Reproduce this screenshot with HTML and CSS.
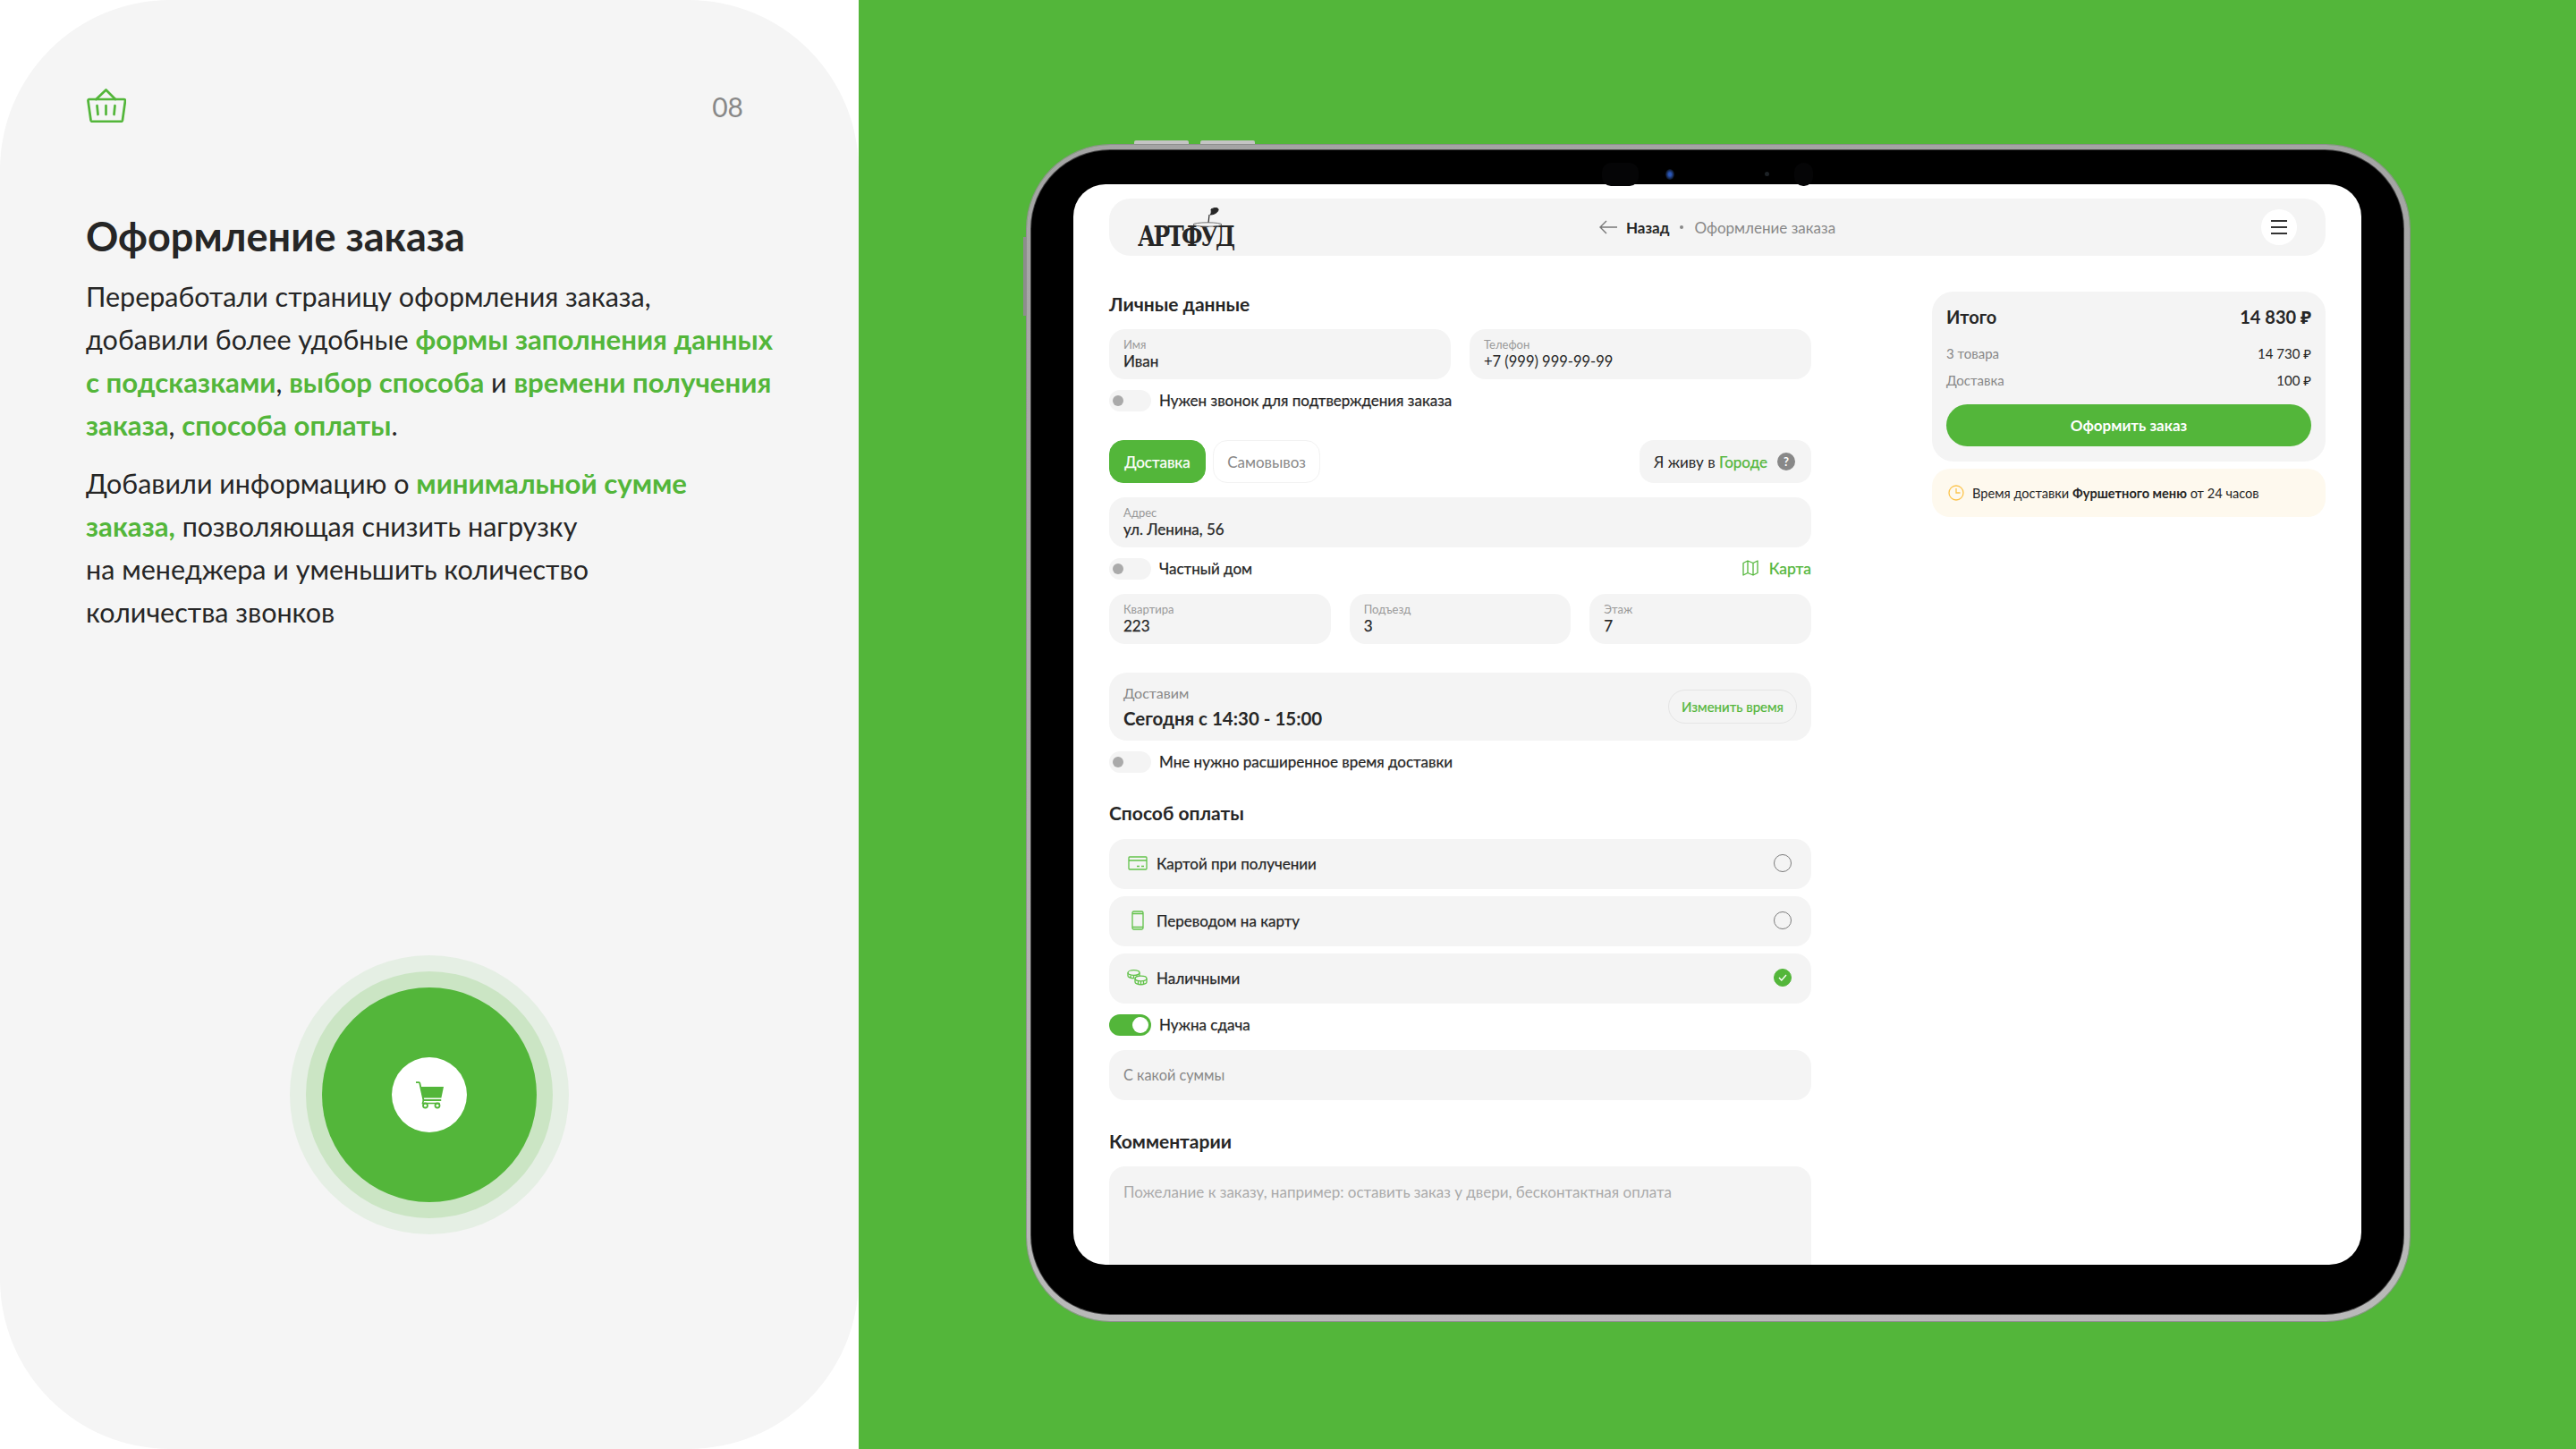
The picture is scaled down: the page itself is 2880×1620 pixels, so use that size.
FILE: index.html
```html
<!DOCTYPE html>
<html lang="ru">
<head>
  <meta charset="UTF-8">
  <title>Оформление заказа</title>
  <link rel="stylesheet" href="styles.css">
</head>
<body>
  <div class="slide">
    <section class="panel">
      <div class="panel-top">
        <svg class="basket" viewBox="0 0 44 38" fill="none" stroke="#53b63a" stroke-width="2.700" stroke-linejoin="round" stroke-linecap="round">
          <path d="M10.500 12 21.500 1.500 32 12"/>
          <path d="M2.500 12h39a1.500 1.500 0 0 1 1.500 1.700l-3 21.500a2 2 0 0 1-2 1.600H6.500a2 2 0 0 1-2-1.600l-3-21.500A1.500 1.500 0 0 1 2.500 12z"/>
          <path d="M11.500 19l1 10M21.500 19v10M31.500 19l-1 10"/>
        </svg>
        <span class="page-no">08</span>
      </div>
      <h1>Оформление заказа</h1>
      <p>Переработали страницу оформления заказа,<br>добавили более удобные <b>формы заполнения данных<br>с подсказками</b>, <b>выбор способа</b> и <b>времени получения<br>заказа</b>, <b>способа оплаты</b>.</p>
      <p class="second">Добавили информацию о <b>минимальной сумме<br>заказа,</b> позволяющая снизить нагрузку<br>на менеджера и уменьшить количество<br>количества звонков</p>
      <div class="ring-outer">
        <div class="ring-mid">
          <div class="ring-core">
            <div class="cart-circle">
              <svg width="31" height="31" viewBox="0 0 31 31" fill="none" stroke="#53b63a">
                <path d="M0 1.200h3.300a1 1 0 0 1 1 .8L8.500 21h19" stroke-width="1.800" stroke-linecap="round"/>
                <path d="M5 6h26l-2.600 12.500H7.600z" fill="#53b63a" stroke="none"/>
                <path d="M8.500 21 7.500 24.500h19" stroke-width="1.600"/>
                <circle cx="10.500" cy="27" r="2.500" stroke-width="1.800"/>
                <circle cx="24" cy="27" r="2.500" stroke-width="1.800"/>
              </svg>
            </div>
          </div>
        </div>
      </div>
    </section>

    <section class="stage">
      <div class="tablet">
        <span class="side-btn top-one"></span>
        <span class="side-btn top-two"></span>
        <span class="side-btn left-one"></span>
        <div class="bezel">
          <span class="sensor sensor-a"></span>
          <span class="cam"></span>
          <span class="cam-small"></span>
          <span class="sensor sensor-b"></span>
          <div class="screen">
            <header class="bar">
              <div class="logo">
                <span class="logo-text">АРТФУД</span>
                <svg class="logo-bowl" width="40" height="32" viewBox="0 0 40 32" fill="none" stroke="#262626">
                  <path d="M24 2c4-2.500 9-2 8 1-1 3-5 5-9 5 2-2 1-4 1-6z" fill="#262626"/>
                  <path d="M22 8l-1 9" stroke-width="1.200"/>
                  <ellipse cx="20" cy="19" rx="16" ry="2.200" fill="#f4f4f4" stroke-width=".8" stroke="#555"/>
                </svg>
              </div>
              <nav class="crumbs">
                <svg width="20" height="16" viewBox="0 0 20 16" fill="none" stroke="#777" stroke-width="1.400"><path d="M8 1 1 8l7 7M1 8h19"/></svg>
                <span class="back">Назад</span>
                <span class="dot"></span>
                <span class="crumb-now">Оформление заказа</span>
              </nav>
              <button class="burger"><i></i><i></i><i></i></button>
            </header>

            <div class="columns">
              <main class="form">
                <h2>Личные данные</h2>
                <div class="row-two">
                  <div class="field"><label>Имя</label><span>Иван</span></div>
                  <div class="field"><label>Телефон</label><span class="thin">+7 (999) 999-99-99</span></div>
                </div>
                <div class="check-row"><span class="toggle"></span>Нужен звонок для подтверждения заказа</div>

                <div class="tabs">
                  <span class="tab active">Доставка</span>
                  <span class="tab">Самовывоз</span>
                  <span class="city">Я живу в&nbsp;<em>Городе</em><span class="help">?</span></span>
                </div>
                <div class="field address"><label>Адрес</label><span>ул. Ленина, 56</span></div>
                <div class="check-row">
                  <span class="toggle"></span>Частный дом
                  <a class="map-link">
                    <svg width="18" height="18" viewBox="0 0 18 18" fill="none" stroke="#53b63a" stroke-width="1.300" stroke-linejoin="round"><path d="M1 3.500 6 1l6 2.500L17 1v13.500L12 17l-6-2.500L1 17zM6 1v13.500M12 3.500V17"/></svg>
                    Карта
                  </a>
                </div>
                <div class="row-three">
                  <div class="field"><label>Квартира</label><span>223</span></div>
                  <div class="field"><label>Подъезд</label><span>3</span></div>
                  <div class="field"><label>Этаж</label><span>7</span></div>
                </div>
                <div class="delivery">
                  <div>
                    <div class="delivery-label">Доставим</div>
                    <div class="delivery-time">Сегодня с 14:30 - 15:00</div>
                  </div>
                  <span class="change-btn">Изменить время</span>
                </div>
                <div class="check-row"><span class="toggle"></span>Мне нужно расширенное время доставки</div>

                <h2 class="pay-title">Способ оплаты</h2>
                <div class="pay-list">
                  <div class="pay">
                    <span class="pay-icon">
                      <svg width="22" height="16" viewBox="0 0 22 16" fill="none" stroke="#62c24a" stroke-width="1.300"><rect x="1" y="1" width="20" height="14" rx="1"/><path d="M1 5h20M10 11.500h3M15 11.500h3"/></svg>
                    </span>
                    Картой при получении
                    <span class="radio"></span>
                  </div>
                  <div class="pay">
                    <span class="pay-icon">
                      <svg width="14" height="22" viewBox="0 0 14 22" fill="none" stroke="#62c24a" stroke-width="1.300"><rect x="1" y="1" width="12" height="20" rx="1.500"/><path d="M1 3.500h12M1 18.500h12"/></svg>
                    </span>
                    Переводом на карту
                    <span class="radio"></span>
                  </div>
                  <div class="pay">
                    <span class="pay-icon">
                      <svg width="23" height="18" viewBox="0 0 23 18" fill="none" stroke="#62c24a" stroke-width="1.300"><ellipse cx="7.500" cy="3.500" rx="6.500" ry="2.800"/><path d="M1 3.500v3.500c0 1.500 3 2.800 6.500 2.800M14 3.500v3.500M4 6.500v3M7.500 7v3M11 6.500v1"/><ellipse cx="15.500" cy="10" rx="6.500" ry="2.800"/><path d="M9 10v4c0 1.500 3 2.800 6.500 2.800s6.500-1.300 6.500-2.800v-4M12.500 13v3.500M15.500 13v4M18.500 13v3.500"/></svg>
                    </span>
                    Наличными
                    <span class="radio checked">
                      <svg width="10" height="8" viewBox="0 0 10 8" fill="none" stroke="#fff" stroke-width="1.300"><path d="M1 4l2.800 3L9 1"/></svg>
                    </span>
                  </div>
                </div>
                <div class="check-row"><span class="toggle on"></span>Нужна сдача</div>
                <div class="field single">С какой суммы</div>

                <h2 class="comment-title">Комментарии</h2>
                <div class="comment">Пожелание к заказу, например: оставить заказ у двери, бесконтактная оплата</div>
              </main>

              <aside class="side">
                <div class="total">
                  <div class="total-head"><span>Итого</span><span>14 830 ₽</span></div>
                  <div class="total-row"><span class="muted">3 товара</span><span>14 730 ₽</span></div>
                  <div class="total-row"><span class="muted">Доставка</span><span>100 ₽</span></div>
                  <button class="order">Оформить заказ</button>
                </div>
                <div class="note">
                  <svg width="18" height="18" viewBox="0 0 18 18" fill="none" stroke="#fcc44d" stroke-width="1.300"><circle cx="9" cy="9" r="8"/><path d="M9 4v5h4.500"/></svg>
                  <span>Время доставки <b>Фуршетного меню</b> от 24 часов</span>
                </div>
              </aside>
            </div>
          </div>
        </div>
      </div>
    </section>
  </div>
</body>
</html>
```

FILE: styles.css
```css
* {
  box-sizing: border-box;
}

body {
  margin: 0;
  background: #fff;
  font-family: "Lato", "Noto Sans", sans-serif;
  color: #262626;
}

.slide {
  display: flex;
  width: 2880px;
  height: 1620px;
  overflow: hidden;
}

/* left panel */
.panel {
  width: 960px;
  height: 1620px;
  padding: 99px 96px 0;
  background: #f5f5f5;
  border-radius: 190px;
}

.panel-top {
  display: flex;
  align-items: center;
  justify-content: space-between;
  padding: 0 33px 0 1px;
}

.basket {
  display: block;
  width: 44px;
  height: 38px;
}

.page-no {
  margin-top: 2px;
  font-size: 30px;
  color: #888;
}

h1 {
  margin: 99px 0 0;
  font-size: 45px;
  line-height: 56px;
  font-weight: 700;
}

.panel p {
  margin: 15px 0 0;
  font-size: 30.500px;
  line-height: 48px;
  white-space: nowrap;
}

.panel p.second {
  margin-top: 17px;
}

.panel b {
  font-size: 31.200px;
  color: #53b63a;
  font-weight: 700;
}

.ring-outer,
.ring-mid,
.ring-core,
.cart-circle {
  display: flex;
  align-items: center;
  justify-content: center;
  border-radius: 50%;
}

.ring-outer {
  width: 312px;
  height: 312px;
  margin: 360px auto 0;
  background: #e5efe4;
}

.ring-mid {
  width: 276px;
  height: 276px;
  background: #cbe5c4;
}

.ring-core {
  width: 240px;
  height: 240px;
  background: #53b63a;
}

.cart-circle {
  width: 84px;
  height: 84px;
  background: #fff;
}

/* tablet */
.stage {
  width: 1920px;
  height: 1620px;
  padding: 162px 0 0 188px;
  background: #53b63a;
}

.tablet {
  position: relative;
  width: 1546px;
  height: 1315px;
  padding: 6px 7px 8px 5px;
  border-radius: 94px;
  background: linear-gradient(#a4a4a4, #b9b9b9);
  box-shadow: 0 0 0 1px #8f8f8f;
}

.side-btn {
  position: absolute;
  background: #c4c4c4;
}

.top-one {
  left: 120px;
  top: -5px;
  width: 61px;
  height: 4px;
  border-radius: 2px 2px 0 0;
}

.top-two {
  left: 194px;
  top: -5px;
  width: 61px;
  height: 4px;
  border-radius: 2px 2px 0 0;
}

.left-one {
  left: -4px;
  top: 103px;
  width: 3px;
  height: 88px;
  background: #8d8d8d;
}

.bezel {
  position: relative;
  width: 100%;
  height: 100%;
  padding: 38px 47px 55px;
  background: #000;
  border-radius: 88px;
  box-shadow: 0 0 0 1px #444;
}

.sensor {
  position: absolute;
  top: 14px;
  height: 26px;
  background: #050506;
  border-radius: 10px;
}

.sensor-a {
  left: 638px;
  width: 41px;
}

.sensor-b {
  left: 853px;
  width: 21px;
}

.cam {
  position: absolute;
  left: 709px;
  top: 21px;
  width: 10px;
  height: 12px;
  border-radius: 50%;
  background: radial-gradient(#2b57b8 20%, #0b1220 70%);
}

.cam-small {
  position: absolute;
  left: 820px;
  top: 24px;
  width: 5px;
  height: 5px;
  border-radius: 50%;
  background: #1d2226;
}

.screen {
  height: 1208px;
  padding: 16px 40px 0;
  overflow: hidden;
  background: #fff;
  border-radius: 36px;
}

.bar {
  display: grid;
  grid-template-columns: 1fr auto 1fr;
  align-items: center;
  height: 64px;
  padding: 0 32px;
  background: #f4f4f4;
  border-radius: 24px;
}

.logo {
  position: relative;
  width: 107px;
  height: 64px;
}

.logo-text {
  position: absolute;
  left: 0;
  bottom: 9px;
  font-family: "DejaVu Serif", serif;
  font-weight: 700;
  font-size: 31px;
  line-height: 26px;
  letter-spacing: -3.500px;
  color: #262626;
  transform: scaleX(.8);
  transform-origin: left;
}

.logo-bowl {
  position: absolute;
  left: 58px;
  top: 10px;
}

.crumbs {
  display: flex;
  align-items: center;
  gap: 10px;
  font-size: 17px;
}

.back {
  font-weight: 700;
}

.dot {
  width: 4px;
  height: 4px;
  margin: 0 2px;
  border-radius: 50%;
  background: #888;
}

.crumb-now {
  color: #888;
}

.burger {
  display: flex;
  flex-direction: column;
  align-items: center;
  justify-content: center;
  justify-self: end;
  gap: 5px;
  width: 40px;
  height: 40px;
  padding: 0;
  border: 0;
  border-radius: 50%;
  background: #fff;
}

.burger i {
  display: block;
  width: 18px;
  height: 2px;
  background: #333;
}

.columns {
  display: flex;
  justify-content: space-between;
  margin-top: 40px;
}

.form {
  width: 785px;
  height: 1100px;
}

h2 {
  margin: 0 0 14px;
  font-size: 21px;
  line-height: 28px;
  font-weight: 700;
}

.row-two {
  display: grid;
  grid-template-columns: 1fr 1fr;
  gap: 21px;
}

.row-three {
  display: grid;
  grid-template-columns: 1fr 1fr 1fr;
  gap: 21px;
  margin-top: 16px;
}

.field {
  display: flex;
  flex-direction: column;
  justify-content: center;
  gap: 2px;
  height: 56px;
  padding: 0 16px;
  background: #f4f4f4;
  border-radius: 18px;
  font-size: 17px;
  line-height: 20px;
  -webkit-text-stroke: .25px #262626;
}

.field label {
  font-size: 13px;
  line-height: 14px;
  color: #999;
  -webkit-text-stroke: 0;
}

.field .thin {
  font-size: 16.500px;
  -webkit-text-stroke: 0;
}

.field.address {
  margin-top: 16px;
}

.field.single {
  margin-top: 16px;
  font-size: 16.300px;
  color: #888;
  -webkit-text-stroke: 0;
}

.check-row {
  display: flex;
  align-items: center;
  height: 24px;
  margin-top: 12px;
  padding-bottom: 2px;
  font-size: 17px;
  -webkit-text-stroke: .25px #262626;
}

.toggle {
  position: relative;
  width: 47px;
  height: 24px;
  margin: 0 9px -2px 0;
  border-radius: 12px;
  background: #f4f4f4;
}

.toggle::after {
  content: "";
  position: absolute;
  left: 4px;
  top: 6px;
  width: 12px;
  height: 12px;
  border-radius: 50%;
  background: #aaa;
}

.toggle.on {
  background: #53b63a;
}

.toggle.on::after {
  left: 26px;
  top: 3px;
  width: 18px;
  height: 18px;
  background: #fff;
}

.map-link {
  display: flex;
  align-items: center;
  gap: 12px;
  margin-left: auto;
  color: #53b63a;
  font-size: 17.500px;
  -webkit-text-stroke: .25px #53b63a;
}

.tabs {
  display: flex;
  align-items: stretch;
  gap: 8px;
  height: 48px;
  margin-top: 32px;
  font-size: 17px;
}

.tab {
  display: flex;
  align-items: center;
  justify-content: center;
  width: 120px;
  border: 1px solid #f2f2f2;
  border-radius: 16px;
  color: #888;
}

.tab.active {
  width: 108px;
  border-color: #53b63a;
  background: #53b63a;
  color: #fff;
  -webkit-text-stroke: .25px #fff;
}

.city {
  display: flex;
  align-items: center;
  margin-left: auto;
  padding: 0 18px 0 16px;
  border-radius: 16px;
  background: #f4f4f4;
}

.city em {
  font-style: normal;
  color: #53b63a;
  -webkit-text-stroke: .25px #53b63a;
}

.help {
  display: flex;
  align-items: center;
  justify-content: center;
  width: 20px;
  height: 20px;
  margin-left: 11px;
  border-radius: 50%;
  background: #888;
  color: #fff;
  font-size: 13px;
  font-weight: 700;
}

.delivery {
  display: flex;
  align-items: center;
  justify-content: space-between;
  height: 76px;
  margin-top: 32px;
  padding: 0 16px;
  background: #f4f4f4;
  border-radius: 20px;
}

.delivery-label {
  font-size: 16px;
  line-height: 20px;
  color: #888;
}

.delivery-time {
  margin-top: 5px;
  font-size: 20.500px;
  line-height: 26px;
  font-weight: 700;
}

.change-btn {
  display: flex;
  align-items: center;
  height: 38px;
  padding: 0 14px;
  border: 1px solid #e5e5e5;
  border-radius: 19px;
  font-size: 15px;
  color: #53b63a;
  -webkit-text-stroke: .2px #53b63a;
}

.pay-title {
  margin: 31px 0 15px;
}

.pay-list {
  display: flex;
  flex-direction: column;
  gap: 8px;
}

.pay {
  display: flex;
  align-items: center;
  height: 56px;
  padding: 0 22px 2px 20px;
  background: #f4f4f4;
  border-radius: 18px;
  font-size: 17px;
  -webkit-text-stroke: .25px #262626;
}

.pay-icon {
  display: flex;
  justify-content: center;
  width: 23px;
  margin-right: 10px;
}

.radio {
  display: flex;
  align-items: center;
  justify-content: center;
  width: 20px;
  height: 20px;
  margin-left: auto;
  border: 1.500px solid #7c7c7c;
  border-radius: 50%;
}

.radio.checked {
  border-color: #53b63a;
  background: #53b63a;
}

.comment-title {
  margin: 32px 0 14px;
}

.comment {
  height: 200px;
  padding: 20px 16px;
  background: #f4f4f4;
  border-radius: 18px;
  font-size: 17px;
  line-height: 18px;
  color: #aaa;
}

.side {
  width: 440px;
}

.total {
  height: 190px;
  padding: 14px 16px;
  background: #f4f4f4;
  border-radius: 24px;
}

.total-head {
  display: flex;
  justify-content: space-between;
  font-size: 20px;
  line-height: 28px;
  font-weight: 700;
}

.total-row {
  display: flex;
  justify-content: space-between;
  margin-top: 10px;
  font-size: 15px;
  line-height: 20px;
}

.total-head + .total-row {
  margin-top: 17px;
}

.muted {
  color: #888;
}

.order {
  display: block;
  width: 100%;
  height: 47px;
  margin-top: 17px;
  border: 0;
  border-radius: 24px;
  background: #53b63a;
  color: #fff;
  font-family: inherit;
  font-size: 17px;
  font-weight: 700;
}

.note {
  display: flex;
  align-items: center;
  gap: 9px;
  height: 54px;
  margin-top: 8px;
  padding: 0 18px;
  background: #fef9ee;
  border-radius: 20px;
  font-size: 14.600px;
}
```
